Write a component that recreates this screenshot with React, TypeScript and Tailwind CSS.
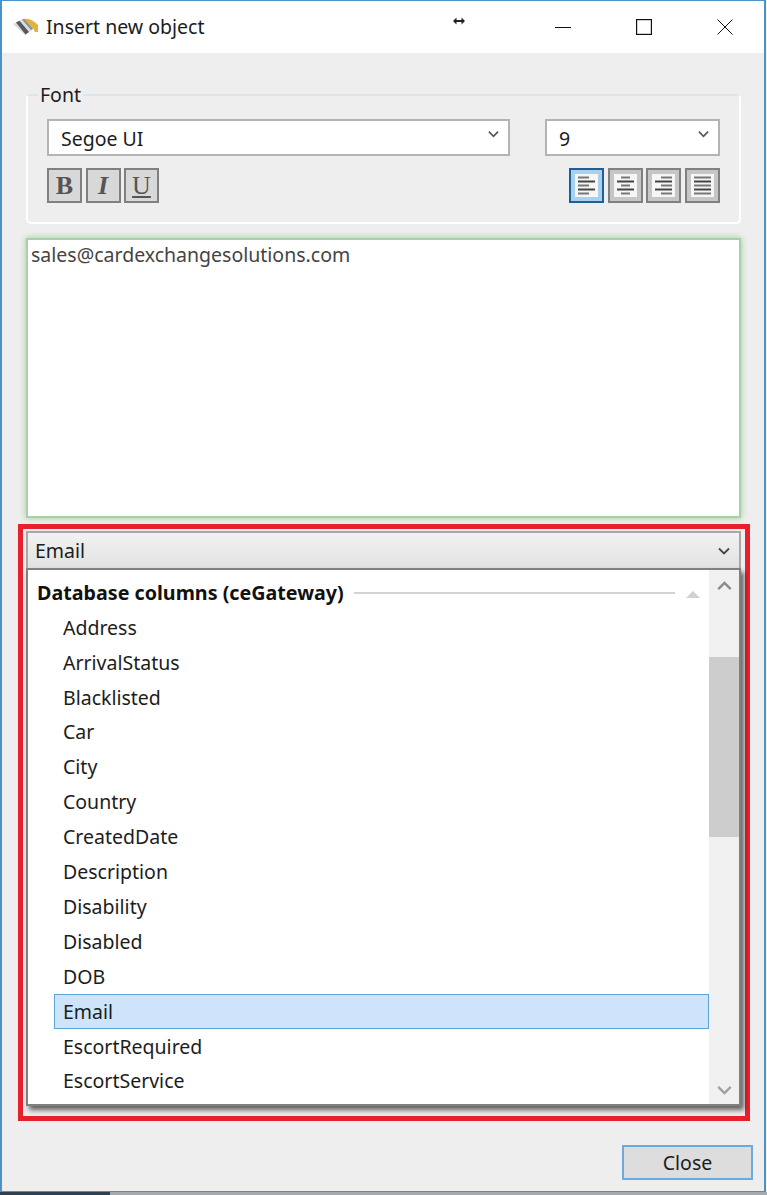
// App.tsx — "Insert new object" dialog with font options and the column drop-down open.
const COLUMNS = [
  'Address',
  'ArrivalStatus',
  'Blacklisted',
  'Car',
  'City',
  'Country',
  'CreatedDate',
  'Description',
  'Disability',
  'Disabled',
  'DOB',
  'Email',
  'EscortRequired',
  'EscortService',
];

const ALIGN_ROWS: Record<string, [number, number][]> = {
  left: [[0, 11], [0, 17], [0, 11], [0, 17], [0, 11]],
  center: [[4, 13], [0, 17], [4, 13], [0, 17], [4, 13]],
  right: [[6, 17], [0, 17], [6, 17], [0, 17], [6, 17]],
  justify: [[0, 17], [0, 17], [0, 17], [0, 17], [0, 17]],
};

function Chevron({ dir = 'down', className }: { dir?: 'down' | 'up'; className?: string }) {
  return (
    <svg viewBox="0 0 12 8" fill="none" stroke="currentColor" strokeWidth="1.8" className={className}>
      <polyline points={dir === 'down' ? '1,1.5 6,6.5 11,1.5' : '1,6.5 6,1.5 11,6.5'} />
    </svg>
  );
}

function AppIcon() {
  return (
    <svg viewBox="0 0 28 20" className="w-[28px] h-[20px]">
      <path d="M12 2 C18 1 23 4 27 8 L27 15 L24 15 C22 10 17 6 12 5 Z" fill="#e3b23c" />
      <path d="M2 7 L12 2 L23 12 L14 18 Z" fill="#dcdcdc" />
      <path d="M5 5.5 L8.5 3.8 L18 15 L14.5 17.5 Z" fill="#55585c" />
      <path d="M11 2.6 L13 2 L22 11.5 L20 13 Z" fill="#8f9296" />
    </svg>
  );
}

function FontSelect({ value, className }: { value: string; className: string }) {
  return (
    <div className={`h-[37px] bg-white border-2 border-[#b4b4b4] flex items-center justify-between pl-[12px] pr-[9px] ${className}`}>
      <span className="text-[19.5px] text-[#1c1c1c] leading-none pt-[3px]">{value}</span>
      <Chevron className="w-[11px] h-[8px] text-[#555] mb-[7px]" />
    </div>
  );
}

function StyleButton({ children, className }: { children: React.ReactNode; className?: string }) {
  return (
    <button className={`w-[35px] h-[35px] border-2 border-[#808080] bg-[#d8d8d8] text-[#555] text-[26px] font-bold leading-none flex items-center justify-center ${className ?? ''}`} style={{ fontFamily: '"Liberation Serif", serif' }}>
      {children}
    </button>
  );
}

function AlignButton({ kind, active }: { kind: string; active?: boolean }) {
  return (
    <button className={`w-[35px] h-[35px] border-2 p-[4px] ${active ? 'border-[#1f5f96] bg-[#a9d1ee]' : 'border-[#808080] bg-[#c6c6c6]'}`}>
      <svg viewBox="0 0 23 23" className="w-full h-full bg-[#f6f6f6]">
        {ALIGN_ROWS[kind].map(([a, b], i) => (
          <line key={i} x1={a + 3} x2={b + 3} y1={3.5 + i * 4} y2={3.5 + i * 4} stroke={i % 2 ? '#444' : '#777'} strokeWidth="2" />
        ))}
      </svg>
    </button>
  );
}

export default function App() {
  return (
    <div className="w-[767px] h-[1195px] flex flex-col bg-[#f3f6f8] overflow-hidden" style={{ fontFamily: '"Noto Sans", sans-serif' }}>
      <div className="w-[766px] h-[1192px] border-t border-b border-x-2 border-[#4a92c8] flex flex-col relative">
        {/* title bar */}
        <div className="h-[52px] shrink-0 bg-white flex items-center pl-[9px]">
          <AppIcon />
          <span className="ml-[7px] text-[19.5px] text-[#1c1c1c] leading-none">Insert new object</span>
          <div className="ml-auto flex items-center pr-[31px]">
            <svg viewBox="0 0 16 16" fill="none" stroke="#111" strokeWidth="1" className="w-[16px] h-[16px] mr-[65px]">
              <line x1="0" x2="16" y1="8.5" y2="8.5" />
            </svg>
            <svg viewBox="0 0 16 16" fill="none" stroke="#111" strokeWidth="1.2" className="w-[16px] h-[16px] mr-[65px]">
              <rect x="0.6" y="0.6" width="14.8" height="14.8" />
            </svg>
            <svg viewBox="0 0 16 16" fill="none" stroke="#111" strokeWidth="1" className="w-[16px] h-[16px]">
              <line x1="0.5" y1="0.5" x2="15.5" y2="15.5" />
              <line x1="15.5" y1="0.5" x2="0.5" y2="15.5" />
            </svg>
          </div>
        </div>
        {/* resize cursor caught in the screenshot */}
        <svg viewBox="0 0 12 8" className="absolute left-[451px] top-[16px] w-[12px] h-[8px]" fill="#222">
          <path d="M0 4 L3.5 0.5 V3 H8.5 V0.5 L12 4 L8.5 7.5 V5 H3.5 V7.5 Z" />
        </svg>

        <div className="flex-1 bg-[#eeeeee] pl-[24px] pt-[30px] flex flex-col items-start">
          {/* Font group */}
          <fieldset className="w-[715px] h-[141px] border-2 border-white border-t-[#dce4ec] rounded-[5px] pl-[19px] pr-[19px] min-w-0">
            <legend className="-ml-[9px] px-[2px] text-[19.5px] leading-[24px] text-[#1c1c1c]">Font</legend>
            <div className="flex justify-between mt-[12px]">
              <FontSelect value="Segoe UI" className="w-[463px]" />
              <FontSelect value="9" className="w-[175px]" />
            </div>
            <div className="flex justify-between mt-[12px]">
              <div className="flex gap-[3.5px]">
                <StyleButton>B</StyleButton>
                <StyleButton className="italic">I</StyleButton>
                <StyleButton className="underline font-normal">U</StyleButton>
              </div>
              <div className="flex gap-[3.67px]">
                <AlignButton kind="left" active />
                <AlignButton kind="center" />
                <AlignButton kind="right" />
                <AlignButton kind="justify" />
              </div>
            </div>
          </fieldset>

          {/* text box */}
          <div className="mt-[14px] w-[715px] h-[280px] bg-white border-2 border-[#aecdab] shadow-[0_0_6px_rgba(110,200,110,0.75)] px-[3px] py-[2px] text-[19.5px] leading-[26px] text-[#444]">
            sales@cardexchangesolutions.com
          </div>

          {/* red frame around the open column picker */}
          <div className="-ml-[8px] mt-[6px] w-[732px] h-[597px] border-[5px] border-[#e8202c] pl-[3px] pt-[2px]">
            <div className="w-[715px] h-[37px] border-2 border-b-0 border-[#a8a8a8] bg-gradient-to-b from-[#f2f2f2] to-[#e2e2e2] flex items-center justify-between pl-[7px] pr-[9px]">
              <span className="text-[19.5px] leading-none text-[#1c1c1c]">Email</span>
              <Chevron className="w-[12px] h-[8px] text-[#444]" />
            </div>
            <div className="w-[715px] h-[538px] bg-white border-2 border-[#808080] shadow-[3px_4px_5px_rgba(0,0,0,0.6)] flex">
              <div className="flex-1 min-w-0 pl-[9px] pt-[6px]">
                <div className="h-[34px] flex items-center">
                  <span className="text-[19.7px] font-bold text-[#111] leading-none whitespace-nowrap">Database columns (ceGateway)</span>
                  <div className="ml-[10px] w-[321px] h-[2px] bg-[#d4d4d4]" />
                  <div className="ml-[11px] w-0 h-0 border-x-[7px] border-x-transparent border-b-[7px] border-b-[#d0d0d0] mt-[2px]" />
                </div>
                <div className="flex flex-col">
                  {COLUMNS.map((name) => (
                    <div
                      key={name}
                      className={`h-[34.92px] flex items-center text-[19.5px] text-[#1c1c1c] leading-none ml-[17px] pl-[8px] border ${name === 'Email' ? 'bg-[#cde4fa] border-[#5fa3d6]' : 'border-transparent'}`}
                    >
                      {name}
                    </div>
                  ))}
                </div>
              </div>
              <div className="w-[30px] shrink-0 bg-[#f0f0f0] flex flex-col items-center">
                <div className="h-[87px] w-full flex justify-center pt-[11px]">
                  <Chevron dir="up" className="w-[15px] h-[10px] text-[#8a8a8a]" />
                </div>
                <div className="h-[180px] w-full bg-[#cdcdcd]" />
                <div className="flex-1 w-full flex justify-center items-end pb-[9px]">
                  <Chevron className="w-[15px] h-[10px] text-[#a0a0a0]" />
                </div>
              </div>
            </div>
          </div>

          <button className="self-end mr-[11px] mt-[24px] w-[131px] h-[35px] border-2 border-[#6ea8dc] bg-[#dddddd] text-[19.5px] leading-none text-[#1c1c1c]">
            Close
          </button>
        </div>
      </div>
      {/* taskbar sliver below the window */}
      <div className="flex-1 flex">
        <div className="w-[110px] bg-[#2f4052]" />
        <div className="flex-1 bg-[#a4a9ad]" />
      </div>
    </div>
  );
}
